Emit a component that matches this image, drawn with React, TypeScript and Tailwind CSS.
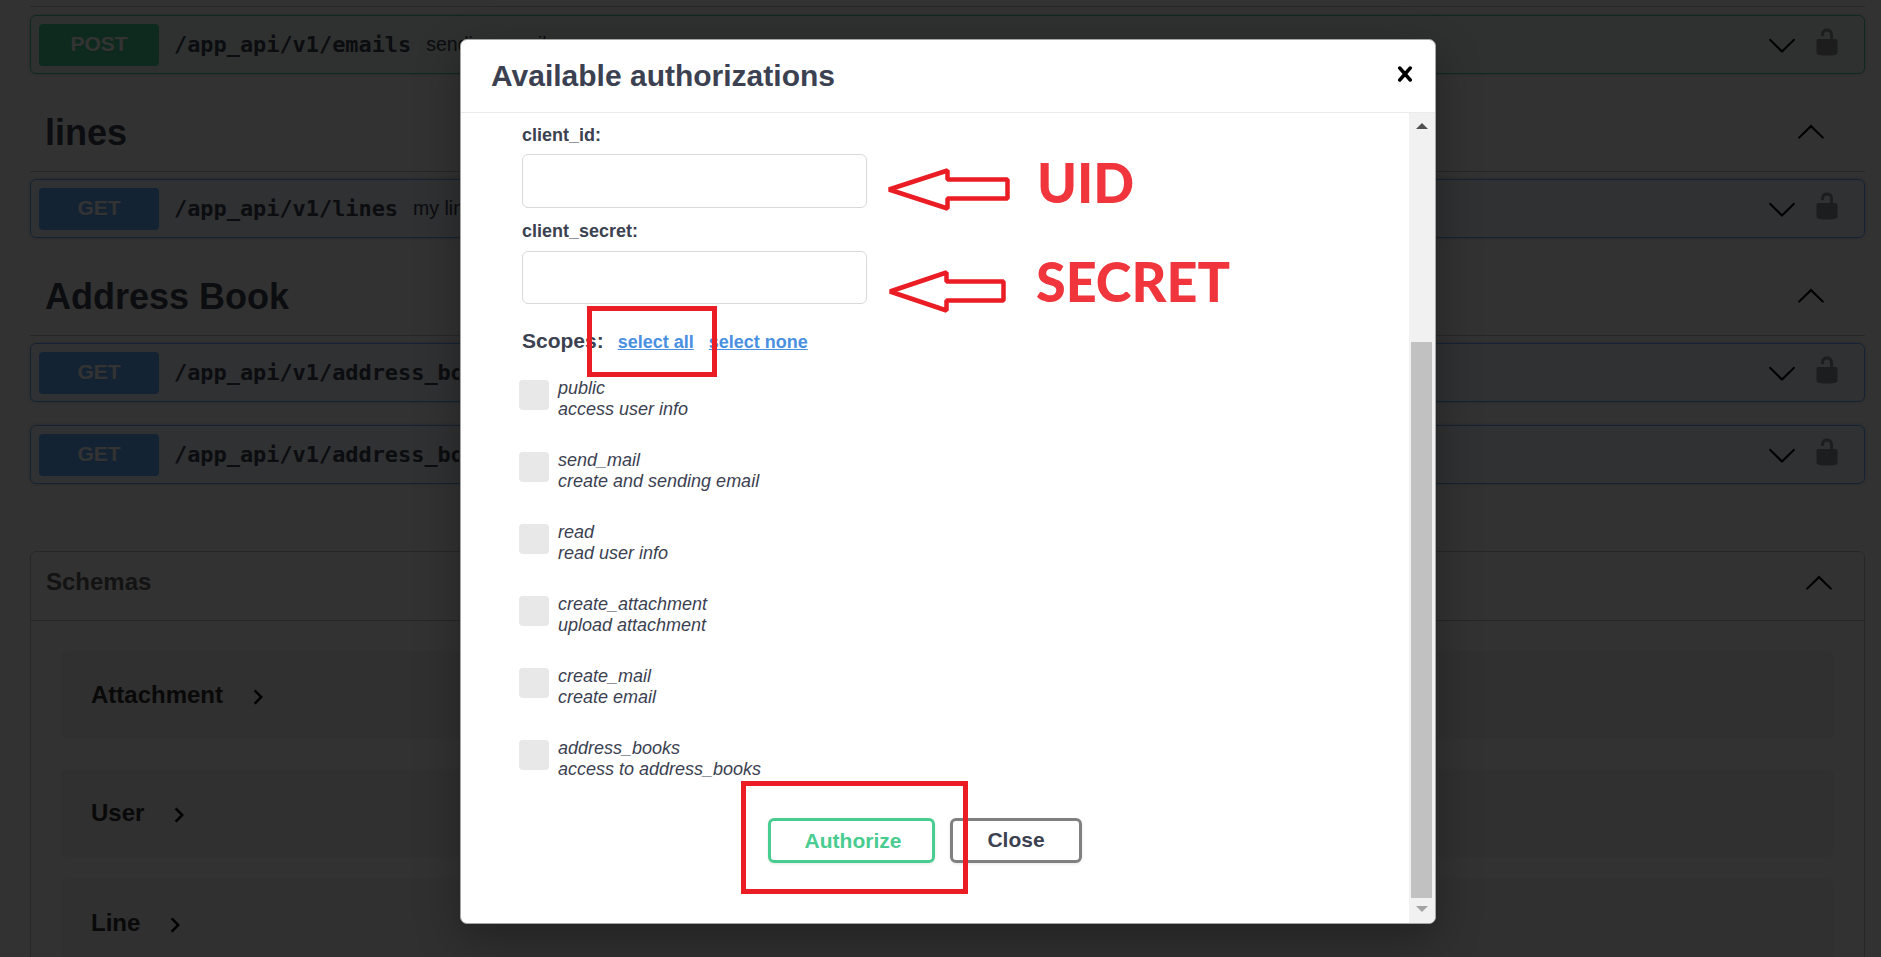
import type { ReactNode } from "react";

const UNLOCKED =
  "M15.8 8H14V5.6C14 2.703 12.665 1 10 1 7.334 1 6 2.703 6 5.6V6h2v-.801C8 3.754 8.797 3 10 3c1.203 0 2 .754 2 2.199V8H4c-.553 0-1 .646-1 1.199V17c0 .549.428 1.139.951 1.307l1.197.387C5.672 18.861 6.55 19 7.1 19h5.8c.549 0 1.428-.139 1.951-.307l1.196-.387c.524-.167.953-.757.953-1.306V9.199C17 8.646 16.352 8 15.8 8z";
const ARROW_DOWN =
  "M17.418 6.109c.272-.268.709-.268.979 0s.271.701 0 .969l-7.908 7.83c-.27.268-.707.268-.979 0l-7.908-7.83c-.27-.268-.27-.701 0-.969.271-.268.709-.268.979 0L10 13.25l7.418-7.141z";
const ARROW_UP =
  "M17.418 14.908c.272.268.709.268.979 0s.271-.701 0-.969l-7.908-7.83c-.27-.268-.707-.268-.979 0l-7.908 7.83c-.27.268-.27.701 0 .969.271.268.709.268.979 0L10 7.767l7.418 7.141z";
const CLOSE =
  "M14.348 14.849c-.469.469-1.229.469-1.697 0L10 11.819l-2.651 3.029c-.469.469-1.229.469-1.697 0-.469-.469-.469-1.229 0-1.697l2.758-3.15-2.759-3.152c-.469-.469-.469-1.228 0-1.697.469-.469 1.228-.469 1.697 0L10 8.183l2.651-3.031c.469-.469 1.228-.469 1.697 0 .469.469.469 1.229 0 1.697l-2.758 3.152 2.758 3.15c.469.469.469 1.229 0 1.698z";

function Icon({ d, className = "" }: { d: string; className?: string }) {
  return (
    <svg viewBox="0 0 20 20" className={`size-[30px] shrink-0 ${className}`}>
      <path d={d} />
    </svg>
  );
}

function Operation({ method, path, summary = "", className = "" }: { method: "GET" | "POST"; path: string; summary?: string; className?: string }) {
  const tone = method === "POST" ? "border-[#49cc90] bg-[#49cc90]/10" : "border-[#61affe] bg-[#61affe]/10";
  const badge = method === "POST" ? "bg-[#49cc90]" : "bg-[#61affe]";
  return (
    <div className={`flex h-[59px] items-center rounded-[6px] border pr-[22px] pl-2 shadow-[0_0_5px_rgba(0,0,0,0.19)] ${tone} ${className}`}>
      <span className={`flex h-[42px] w-[120px] shrink-0 items-center justify-center rounded-[4px] pb-[2px] text-[21px] font-bold text-white [text-shadow:0_1px_0_rgba(0,0,0,0.1)] ${badge}`}>
        {method}
      </span>
      <span className="ml-[15px] max-w-[285px] overflow-hidden pt-[2px] font-['DejaVu_Sans_Mono',monospace] text-[21.9px] font-bold whitespace-nowrap">{path}</span>
      <span className="ml-[15px] flex-1 text-[19.5px] whitespace-nowrap">{summary}</span>
      <Icon d={ARROW_DOWN} className="fill-black" />
      <Icon d={UNLOCKED} className="mb-[6px] ml-[15px] fill-black opacity-40" />
    </div>
  );
}

function TagHeader({ children, className = "" }: { children: ReactNode; className?: string }) {
  return (
    <div className={`mb-[7px] flex h-[98px] items-center justify-between border-b border-[#3b4151]/30 pr-[39px] pl-[15px] ${className}`}>
      <h3 className="text-[36px] font-bold">{children}</h3>
      <Icon d={ARROW_UP} className="mb-1 fill-black" />
    </div>
  );
}

function Model({ name, className = "" }: { name: string; className?: string }) {
  return (
    <div className={`mx-[30px] flex h-[88px] items-center rounded-[6px] bg-black/5 pl-[30px] ${className}`}>
      <span className="text-[24px] font-bold text-[#303030]">{name}</span>
      <svg viewBox="0 0 24 24" className="mt-[3px] ml-5 size-[30px] fill-black">
        <path d="M10 6L8.59 7.41 13.17 12l-4.58 4.59L10 18l6-6z" />
      </svg>
    </div>
  );
}

const scopes = [
  ["public", "access user info"],
  ["send_mail", "create and sending email"],
  ["read", "read user info"],
  ["create_attachment", "upload attachment"],
  ["create_mail", "create email"],
  ["address_books", "access to address_books"],
];

function Field({ label, className = "" }: { label: string; className?: string }) {
  return (
    <label className="block">
      <span className="block text-[18px] leading-[22px] font-bold">{label}</span>
      <input className={`block w-[345px] rounded-[6px] border border-[#d9d9d9] bg-white ${className}`} />
    </label>
  );
}

function AuthDialog() {
  return (
    <div className="mt-[39px] ml-[460px] flex h-[885px] w-[976px] flex-col overflow-hidden rounded-[7px] border border-[#a5a5a5] bg-white shadow-[0_15px_45px_rgba(0,0,0,0.3)]">
      <header className="flex h-[73px] shrink-0 items-center justify-between border-b border-[#ebebeb] pr-[15px] pb-[2px] pl-[30px]">
        <h2 className="text-[30px] font-bold">Available authorizations</h2>
        <Icon d={CLOSE} className="mb-[3px] fill-black" />
      </header>
      <div className="flex flex-1">
        <div className="flex-1 pt-[11px] pl-[61px]">
          <Field label="client_id:" className="mt-[8px] h-[54px]" />
          <div className="h-[12px]" />
          <Field label="client_secret:" className="mt-[9px] h-[53px]" />
          <div className="mt-[25px] flex items-baseline text-[21px] leading-6 font-bold">
            <span>Scopes:</span>
            <a className="ml-[14px] text-[18px] text-[#4990e2] underline">select all</a>
            <a className="ml-[15px] text-[18px] text-[#4990e2] underline">select none</a>
          </div>
          <div className="mt-[24px] -ml-[3px] flex flex-col">
            {scopes.map(([name, text]) => (
              <div key={name} className="flex h-[72px]">
                <span className="mt-[2px] size-[30px] rounded-[4px] bg-[#e8e8e8]" />
                <p className="ml-[9px] text-[18px] leading-[21px] italic">
                  {name}
                  <br />
                  {text}
                </p>
              </div>
            ))}
          </div>
          <div className="mt-[8px] ml-[246px] flex gap-[15px] text-[21px] font-bold">
            <button className="h-[45px] w-[167px] rounded-[6px] border-[3px] border-[#49cc90] pl-[3px] text-[#49cc90] shadow-[0_1px_3px_rgba(0,0,0,0.1)]">Authorize</button>
            <button className="h-[45px] w-[132px] rounded-[6px] border-[3px] border-[#808080] pb-[2px] shadow-[0_1px_3px_rgba(0,0,0,0.1)]">Close</button>
          </div>
        </div>
        <div className="flex w-[26px] flex-col items-center bg-[#f1f1f1] pr-px">
          <svg viewBox="0 0 12 6" className="mt-[10px] h-[6px] w-[12px] fill-[#505050]">
            <path d="M0 6L6 0l6 6z" />
          </svg>
          <div className="mt-[213px] h-[556px] w-[21px] bg-[#c1c1c1]" />
          <svg viewBox="0 0 12 6" className="mt-[8px] h-[6px] w-[12px] fill-[#a3a3a3]">
            <path d="M0 0h12L6 6z" />
          </svg>
        </div>
      </div>
    </div>
  );
}

function Annotations() {
  return (
    <>
      <svg viewBox="0 0 1881 957" className="pointer-events-none absolute inset-0 h-[957px] w-[1881px]" fill="none" stroke="#ea1c24">
        <rect x="589.5" y="308.5" width="125" height="66" strokeWidth="5" />
        <rect x="743.5" y="783.5" width="222" height="108" strokeWidth="5" />
        <path d="M889 189.5L947.5 170.5V179.5H1007.5V198.5H947.5V208.5Z" strokeWidth="4.5" strokeLinejoin="bevel" />
        <path d="M890 291.5L946.5 272.5V281.5H1003.5V300.5H946.5V310.5Z" strokeWidth="4.5" strokeLinejoin="bevel" />
      </svg>
      <span className="absolute top-[148px] left-[1037px] origin-left scale-x-[0.96] font-['Lato',sans-serif] text-[56px] leading-[68px] font-black text-[#f0353c]">UID</span>
      <span className="absolute top-[247px] left-[1036px] origin-left scale-x-[0.963] font-['Lato',sans-serif] text-[56px] leading-[68px] font-black text-[#f0353c]">SECRET</span>
    </>
  );
}

export default function App() {
  return (
    <div className="relative h-[957px] w-[1881px] overflow-hidden bg-[#fafafa] font-['Liberation_Sans',Arial,sans-serif] text-[#3b4151]">
      <main className="flex flex-col pt-[6px] pr-4 pl-[30px]">
        <div className="mb-2 border-t border-[#3b4151]/30" />
        <Operation method="POST" path="/app_api/v1/emails" summary="sending email" />
        <TagHeader className="pt-5">lines</TagHeader>
        <Operation method="GET" path="/app_api/v1/lines" summary="my lines" />
        <TagHeader className="pt-[21px]">Address Book</TagHeader>
        <Operation method="GET" path="/app_api/v1/address_books" />
        <Operation method="GET" path="/app_api/v1/address_books" className="mt-[23px]" />
        <section className="mt-[67px] h-[500px] rounded-[6px] border border-[#3b4151]/30">
          <div className="mb-[30px] flex h-[69px] items-center justify-between border-b border-[#3b4151]/30 pr-[30px] pb-2 pl-[15px]">
            <h4 className="text-[24px] font-bold text-[#606060]">Schemas</h4>
            <Icon d={ARROW_UP} className="fill-black" />
          </div>
          <Model name="Attachment" />
          <Model name="User" className="mt-[30px]" />
          <Model name="Line" className="mt-[22px]" />
        </section>
      </main>
      <div className="absolute inset-0 bg-black/80">
        <AuthDialog />
      </div>
      <Annotations />
    </div>
  );
}
